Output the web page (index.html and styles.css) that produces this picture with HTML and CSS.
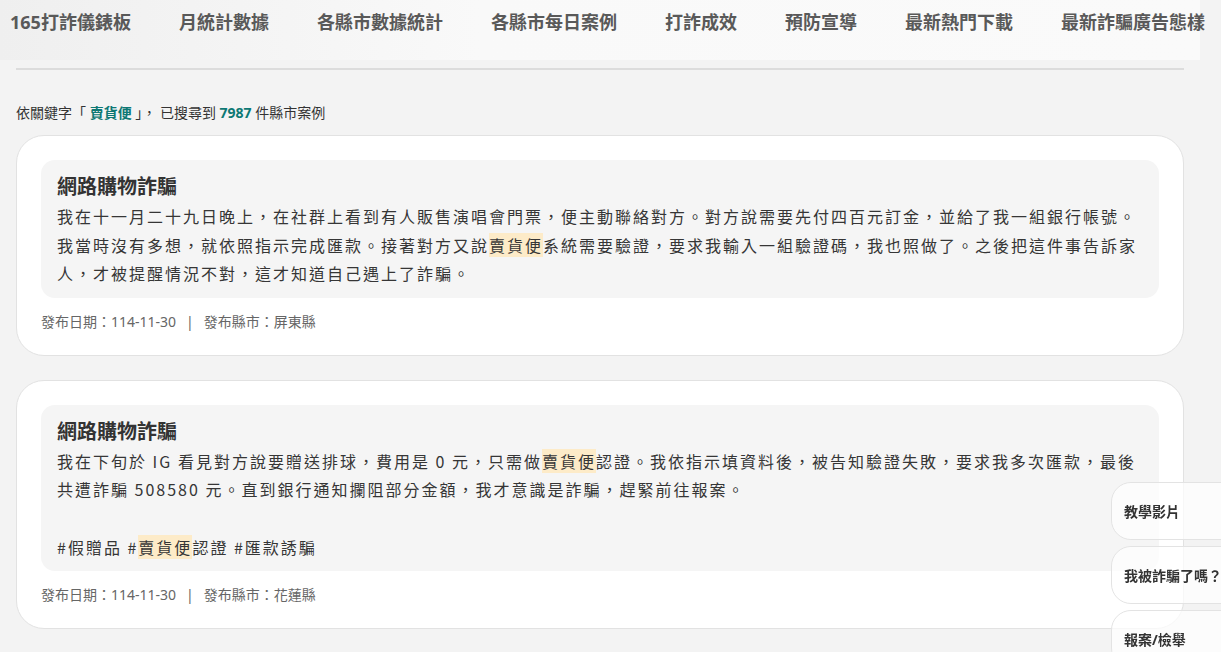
FILE: index.html
```html
<!DOCTYPE html>
<html>
<head>
    <title>各縣市每日案例</title>
    <link rel="stylesheet" href="styles.css">
</head>
<body>
    <nav class="topnav">
        <a>165打詐儀錶板</a>
        <a>月統計數據</a>
        <a>各縣市數據統計</a>
        <a>各縣市每日案例</a>
        <a>打詐成效</a>
        <a>預防宣導</a>
        <a>最新熱門下載</a>
        <a>最新詐騙廣告態樣</a>
    </nav>

    <main class="main">
        <hr class="divider">

        <p class="summary">依關鍵字「 <b>賣貨便</b> 」， 已搜尋到 <b>7987</b> 件縣市案例</p>

        <div class="case">
            <div class="case-body">
                <h3>網路購物詐騙</h3>
                <p>我在十一月二十九日晚上，在社群上看到有人販售演唱會門票，便主動聯絡對方。對方說需要先付四百元訂金，並給了我一組銀行帳號。我當時沒有多想，就依照指示完成匯款。接著對方又說<mark>賣貨便</mark>系統需要驗證，要求我輸入一組驗證碼，我也照做了。之後把這件事告訴家人，才被提醒情況不對，這才知道自己遇上了詐騙。</p>
            </div>
            <div class="meta">發布日期：114-11-30<span class="sep">|</span>發布縣市：屏東縣</div>
        </div>

        <div class="case">
            <div class="case-body">
                <h3>網路購物詐騙</h3>
                <p>我在下旬於 IG 看見對方說要贈送排球，費用是 0 元，只需做<mark>賣貨便</mark>認證。我依指示填資料後，被告知驗證失敗，要求我多次匯款，最後共遭詐騙 508580 元。直到銀行通知攔阻部分金額，我才意識是詐騙，趕緊前往報案。

#假贈品 #<mark>賣貨便</mark>認證 #匯款誘騙</p>
            </div>
            <div class="meta">發布日期：114-11-30<span class="sep">|</span>發布縣市：花蓮縣</div>
        </div>
    </main>

    <div class="float-links">
        <a>教學影片</a>
        <a>我被詐騙了嗎？</a>
        <a>報案/檢舉</a>
    </div>
</body>
</html>
```

FILE: styles.css
```css
body { margin: 0; background: #f3f3f3; color: #333; font-family: "Noto Sans", "Noto Sans CJK TC", sans-serif; }

.topnav { display: flex; gap: 48px; height: 44px; padding: 0 0 16px 10px; width: 1190px; background: linear-gradient(to right, #efefef, #f9f9f9 40%, #fafafa); }
.topnav a { font-size: 18px; font-weight: 700; color: #595959; line-height: 44px; white-space: nowrap; }

.main { width: 1168px; margin-left: 16px; padding-bottom: 40px; }
.divider { margin: 8px 0 0; border: none; height: 2px; background: #dcdcdc; }

.summary { margin: 31px 0 10px; font-size: 14px; line-height: 24px; }
.summary b { color: #0d7874; }

.case { background: #fff; border: 1px solid #e2e2e2; border-radius: 28px; padding: 24px 24px 23px; margin-bottom: 24px; }
.case-body { background: #f5f5f5; border-radius: 14px; padding: 12px 16px 10px; }
.case-body h3 { margin: 0; font-size: 20px; line-height: 30px; font-weight: 700; color: #333; }
.case-body p { margin: 0; font-family: "Noto Sans CJK TC", sans-serif; font-size: 16px; line-height: 28.6px; letter-spacing: 2px; color: #363636; white-space: pre-line; }
.case-body mark { background: #fdebc8; color: inherit; }

.meta { margin-top: 14px; font-size: 14px; line-height: 20px; color: #666; }
.meta .sep { margin: 0 10px; }

.float-links { position: fixed; right: -30px; top: 482px; display: flex; flex-direction: column; gap: 6px; }
.float-links a { width: 126px; height: 56px; padding-left: 12px; display: flex; align-items: center; background: rgba(255, 255, 255, 0.72); border: 1px solid #e3e3e3; border-radius: 20px; font-size: 14px; font-weight: 700; color: #333; }
```
